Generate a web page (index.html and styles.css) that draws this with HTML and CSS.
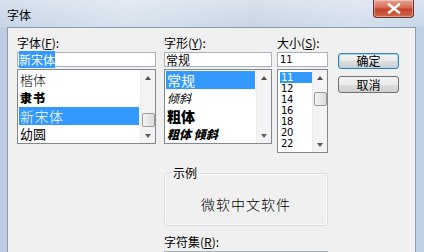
FILE: index.html
```html
<!DOCTYPE html>
<html lang="zh-CN">
<head>
<meta charset="utf-8">
<title>字体</title>
<link rel="stylesheet" href="styles.css">
</head>
<body>
<div class="window">
  <div class="titlebar">
    <span class="title">字体</span>
    <div class="close">
      <svg width="14" height="11" viewBox="0 0 14 11"><path d="M2 1.5 L12 9.5 M12 1.5 L2 9.5" stroke="#fff" stroke-width="2.6" stroke-linecap="round"/></svg>
    </div>
  </div>
  <div class="client">
    <div class="toprow">
      <div class="col col-font">
        <div class="label">字体(<u>F</u>):</div>
        <div class="input"><span class="sel-text">新宋体</span></div>
        <div class="list list-font">
          <div class="items">
            <div class="item kai">楷体</div>
            <div class="item li">隶书</div>
            <div class="item selected song">新宋体</div>
            <div class="item yuan">幼圆</div>
          </div>
          <div class="sb">
            <div class="arr up"></div>
            <div class="track"><div class="thumb thumb-font"></div></div>
            <div class="arr down"></div>
          </div>
        </div>
      </div>
      <div class="col col-style">
        <div class="label">字形(<u>Y</u>):</div>
        <div class="input">常规</div>
        <div class="list list-style">
          <div class="items">
            <div class="item selected regular">常规</div>
            <div class="item italic">倾斜</div>
            <div class="item bold">粗体</div>
            <div class="item bolditalic">粗体 倾斜</div>
          </div>
          <div class="sb">
            <div class="arr up"></div>
            <div class="track"></div>
            <div class="arr down"></div>
          </div>
        </div>
      </div>
      <div class="col col-size">
        <div class="label">大小(<u>S</u>):</div>
        <div class="input num">11</div>
        <div class="list list-size">
          <div class="items nums">
            <div class="nitem selected">11</div>
            <div class="nitem">12</div>
            <div class="nitem">14</div>
            <div class="nitem">16</div>
            <div class="nitem">18</div>
            <div class="nitem">20</div>
            <div class="nitem">22</div>
          </div>
          <div class="sb">
            <div class="arr up"></div>
            <div class="track"><div class="thumb thumb-size"></div></div>
            <div class="arr down"></div>
          </div>
        </div>
      </div>
      <div class="col col-btn">
        <div class="btn default">确定</div>
        <div class="btn">取消</div>
      </div>
    </div>
    <div class="lower">
      <fieldset class="group">
        <legend>示例</legend>
        <div class="sample">微软中文软件</div>
      </fieldset>
      <div class="label charset">字符集(<u>R</u>):</div>
      <div class="combo"></div>
    </div>
  </div>
</div>
</body>
</html>
```
FILE: styles.css
```css
* { box-sizing: border-box; }
html, body {
  margin: 0;
  padding: 0;
  width: 424px;
  height: 252px;
  overflow: hidden;
}
body {
  font-family: "Noto Sans CJK SC", "DejaVu Sans", sans-serif;
  font-size: 12px;
  color: #000;
}
.window {
  width: 424px;
  height: 252px;
  display: flex;
  flex-direction: column;
  background: linear-gradient(90deg, #bccde1 0%, #cfdcea 30%, #bfcee0 60%, #ccd9e9 85%, #bdd0e5 100%);
}
.titlebar {
  height: 27px;
  flex: none;
  display: flex;
  justify-content: space-between;
  align-items: flex-start;
  background: linear-gradient(180deg, rgba(255,255,255,0.4), rgba(255,255,255,0.15));
}
.title {
  padding: 7px 0 0 7px;
  font-size: 12px;
  line-height: 15px;
}
.close {
  width: 41px;
  height: 18px;
  margin-right: 10px;
  border: 1px solid #6b3030;
  border-top: none;
  border-radius: 0 0 4px 4px;
  background: linear-gradient(180deg, #e8a493 0%, #d46a55 45%, #c2402a 55%, #cf6a4f 100%);
  display: flex;
  align-items: center;
  justify-content: center;
  box-shadow: inset 0 0 0 1px rgba(255,255,255,0.35);
}
.client {
  flex: 1;
  margin: 0 8px 0 7px;
  background: #f0f0f0;
  border-left: 1px solid #8a9bb0;
  border-top: 1px solid #8a9bb0;
  border-right: 1px solid #8a9bb0;
  padding: 7px 0 0 9px;
  overflow: hidden;
}
.toprow {
  display: flex;
  align-items: flex-start;
}
.col { display: flex; flex-direction: column; }
.col-font { width: 139px; }
.col-style { width: 108px; margin-left: 8px; }
.col-size { width: 51px; margin-left: 5px; }
.col-btn { width: 61px; margin-left: 10px; padding-top: 18px; }
.label {
  height: 17px;
  line-height: 15px;
  font-size: 12px;
  white-space: nowrap;
}
.label u { text-decoration: underline; }
.input {
  height: 15px;
  border: 1px solid #a6b0bd;
  background: #fff;
  padding-left: 1px;
  font-size: 12px;
  line-height: 13px;
  white-space: nowrap;
}
.input.num {
  font-family: "DejaVu Sans", "Liberation Sans", sans-serif;
  font-size: 10px;
  padding-left: 2px;
}
.sel-text {
  background: #3399ff;
  color: #fff;
}
.list {
  margin-top: 2px;
  display: flex;
  border: 1px solid #828790;
  background: #fff;
}
.list-font, .list-style { height: 75px; }
.list-size { height: 84px; }
.items {
  flex: 1;
  padding: 1px 1px 0 1px;
  overflow: hidden;
}
.item {
  height: 18px;
  line-height: 18px;
  padding-left: 1px;
  font-size: 13px;
  white-space: nowrap;
}
.item.selected {
  background: #3399ff;
  color: #fff;
}
.kai { font-weight: 300; }
.li { font-weight: 900; font-size: 12px; letter-spacing: 1px; }
.song { font-size: 14px; font-weight: 300; letter-spacing: 0.5px; }
.yuan { font-size: 13px; }
.regular { font-size: 14px; }
.italic { font-style: italic; font-size: 12px; }
.bold { font-weight: 900; font-size: 14px; }
.bolditalic { font-weight: 900; font-style: italic; font-size: 12px; }
.nums {
  padding: 2px 0 0 2px;
  font-family: "DejaVu Sans", "Liberation Sans", sans-serif;
  font-size: 10px;
}
.nitem {
  height: 11.2px;
  line-height: 11px;
  padding-left: 1px;
  letter-spacing: -0.3px;
}
.nitem.selected {
  background: #3399ff;
  color: #fff;
  height: 10.5px;
}
.sb {
  width: 15px;
  flex: none;
  display: flex;
  flex-direction: column;
  background: #f3f3f3;
  border-left: 1px solid #ececec;
}
.arr {
  height: 15px;
  flex: none;
  display: flex;
  align-items: center;
  justify-content: center;
}
.arr::after {
  content: "";
  width: 0;
  height: 0;
  border-left: 3.5px solid transparent;
  border-right: 3.5px solid transparent;
}
.arr.up::after { border-bottom: 4px solid #505050; }
.arr.down::after { border-top: 4px solid #606060; }
.track { flex: 1; display: flex; flex-direction: column; align-items: center; }
.thumb {
  width: 13px;
  height: 14px;
  flex: none;
  border: 1px solid #9a9a9a;
  border-radius: 2px;
  background: linear-gradient(90deg, #f4f4f4, #dcdcdc);
}
.thumb-font { margin-top: 28px; }
.thumb-size { margin-top: 7px; }
.btn {
  height: 16px;
  border: 1px solid #707070;
  border-radius: 3px;
  background: linear-gradient(180deg, #f2f2f2 0%, #ebebeb 50%, #dddddd 51%, #cfcfcf 100%);
  text-align: center;
  font-size: 12px;
  line-height: 14px;
}
.btn + .btn { margin-top: 7px; height: 17px; line-height: 15px; }
.btn.default {
  border-color: #3c7fb1;
  box-shadow: inset 0 0 0 1px #a6d6f5;
}
.lower {
  margin-left: 147px;
  width: 164px;
  padding-top: 14px;
}
.group {
  margin: 0;
  padding: 0;
  height: 59px;
  border: 1px solid #dadde0;
  border-radius: 3px;
  box-shadow: inset 0 0 0 1px #fafafa;
}
.group legend {
  margin-left: 6px;
  padding: 0 2px;
  font-size: 12px;
  line-height: 12px;
}
.sample {
  margin-top: 16px;
  text-align: center;
  font-size: 14px;
  line-height: 18px;
  letter-spacing: 1px;
  font-weight: 300;
}
.charset { margin-top: 8px; }
.combo {
  height: 20px;
  border: 1px solid #a6b0bd;
  background: #fff;
}
```
